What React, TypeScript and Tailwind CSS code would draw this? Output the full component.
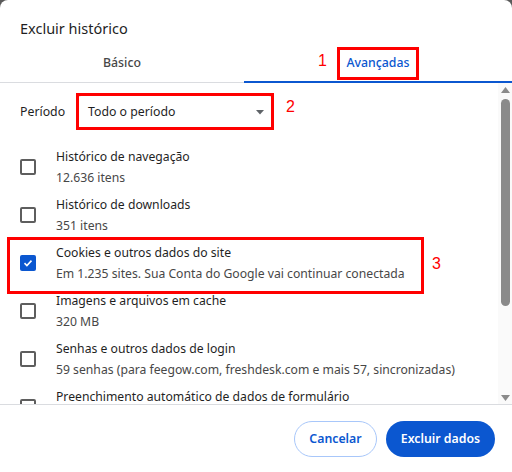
import React from "react";

const items = [
  { t: "Histórico de navegação", s: "12.636 itens", c: false },
  { t: "Histórico de downloads", s: "351 itens", c: false },
  { t: "Cookies e outros dados do site", s: "Em 1.235 sites. Sua Conta do Google vai continuar conectada", c: true },
  { t: "Imagens e arquivos em cache", s: "320 MB", c: false },
  { t: "Senhas e outros dados de login", s: "59 senhas (para feegow.com, freshdesk.com e mais 57, sincronizadas)", c: false },
  { t: "Preenchimento automático de dados de formulário", s: "", c: false },
];

function Checkbox({ checked }: { checked: boolean }) {
  if (checked)
    return (
      <div className="w-[16px] h-[16px] rounded-[2px] bg-[#0b57d0] flex items-center justify-center shrink-0">
        <svg width="12" height="12" viewBox="0 0 12 12">
          <path d="M2.5 6.2 L4.9 8.5 L9.5 3.6" fill="none" stroke="white" strokeWidth="1.6" />
        </svg>
      </div>
    );
  return <div className="w-[16px] h-[16px] rounded-[2px] border-2 border-[#5e5e5e] shrink-0" />;
}

export default function App() {
  return (
    <div
      className="w-[512px] h-[472px] bg-[#5a5a5a] overflow-hidden"
      style={{ fontFamily: '"Noto Sans", sans-serif' }}
    >
      <div className="bg-white rounded-t-[8px] h-full flex flex-col relative">
        <div className="h-[44px] shrink-0 pl-5 pt-[18px] text-[14.5px] leading-[20px] text-[#1f1f1f]">Excluir histórico</div>
        <div className="h-[39px] shrink-0 flex border-b border-[#dadce0] relative">
          <div className="w-[244px] flex items-center justify-center text-[12.3px] font-medium text-[#474747]">Básico</div>
          <div className="flex-1 flex items-center justify-center text-[12.3px] font-medium text-[#0b57d0] relative">
            Avançadas
            <div className="absolute left-0 right-0 bottom-[-1px] h-[2px] bg-[#0b57d0]" />
          </div>
        </div>
        <div className="h-[321px] shrink-0 flex overflow-hidden relative">
          <div className="flex-1 flex flex-col">
            <div className="h-[36px] shrink-0 mt-[11px] flex items-center">
              <div className="pl-5 w-[77px] text-[12.3px] text-[#1f1f1f]">Período</div>
              <div className="w-[196px] h-[35px] border border-[#c4c7c5] rounded-[4px] flex items-center pl-[10px] pr-[8px] text-[12.3px] text-[#1f1f1f]">
                <span className="flex-1">Todo o período</span>
                <svg width="8" height="5" viewBox="0 0 8 5"><path d="M0 0 L8 0 L4 4.5 Z" fill="#5f6368" /></svg>
              </div>
            </div>
            <div className="mt-[13px] shrink-0 flex flex-col">
              {items.map((it, i) => (
                <div key={i} className="h-[48px] flex items-center shrink-0">
                  <div className="w-[56px] pl-[20px] flex">
                    <Checkbox checked={it.c} />
                  </div>
                  <div className="flex flex-col gap-[1px] text-[12.2px] leading-[20px] whitespace-nowrap">
                    <div className="text-[#1f1f1f]">{it.t}</div>
                    {it.s ? <div className="text-[#474747]">{it.s}</div> : <div className="h-[20px]" />}
                  </div>
                </div>
              ))}
            </div>
          </div>
          <div className="w-[14px] bg-[#fafafa] flex flex-col items-center relative shrink-0">
            <svg className="mt-[4px]" width="9" height="6" viewBox="0 0 9 6"><path d="M0 6 L4.5 0 L9 6 Z" fill="#8a8a8a" /></svg>
            <div className="mt-[6px] w-[9px] h-[207px] rounded-full bg-[#8a8a8a]" />
            <div className="flex-1" />
            <svg className="mb-[3px]" width="9" height="6" viewBox="0 0 9 6"><path d="M0 0 L9 0 L4.5 6 Z" fill="#8a8a8a" /></svg>
          </div>
        </div>
        <div className="flex-1 border-t border-[#dadce0] flex justify-end items-start pt-[16px] pr-[17px] gap-[9px]">
          <button className="h-[36px] w-[83px] rounded-full border border-[#a8c7fa] text-[12.3px] font-semibold text-[#0b57d0] bg-white">Cancelar</button>
          <button className="h-[36px] w-[109px] rounded-full bg-[#0b57d0] text-[12.3px] font-semibold text-white">Excluir dados</button>
        </div>

        {/* annotations */}
        <div className="absolute left-[337px] top-[47px] w-[82px] h-[33px] border-[3px] border-[#ff0000]" />
        <div className="absolute left-[318px] top-[52px] text-[16px] leading-[18px] text-[#ff0000]" style={{ fontFamily: '"Liberation Sans", sans-serif' }}>1</div>
        <div className="absolute left-[76px] top-[93px] w-[198px] h-[37px] border-[3px] border-[#ff0000]" />
        <div className="absolute left-[286px] top-[98px] text-[16px] leading-[18px] text-[#ff0000]" style={{ fontFamily: '"Liberation Sans", sans-serif' }}>2</div>
        <div className="absolute left-[7px] top-[237px] w-[417px] h-[57px] border-[3px] border-[#ff0000]" />
        <div className="absolute left-[432px] top-[255px] text-[16px] leading-[18px] text-[#ff0000]" style={{ fontFamily: '"Liberation Sans", sans-serif' }}>3</div>
      </div>
    </div>
  );
}
